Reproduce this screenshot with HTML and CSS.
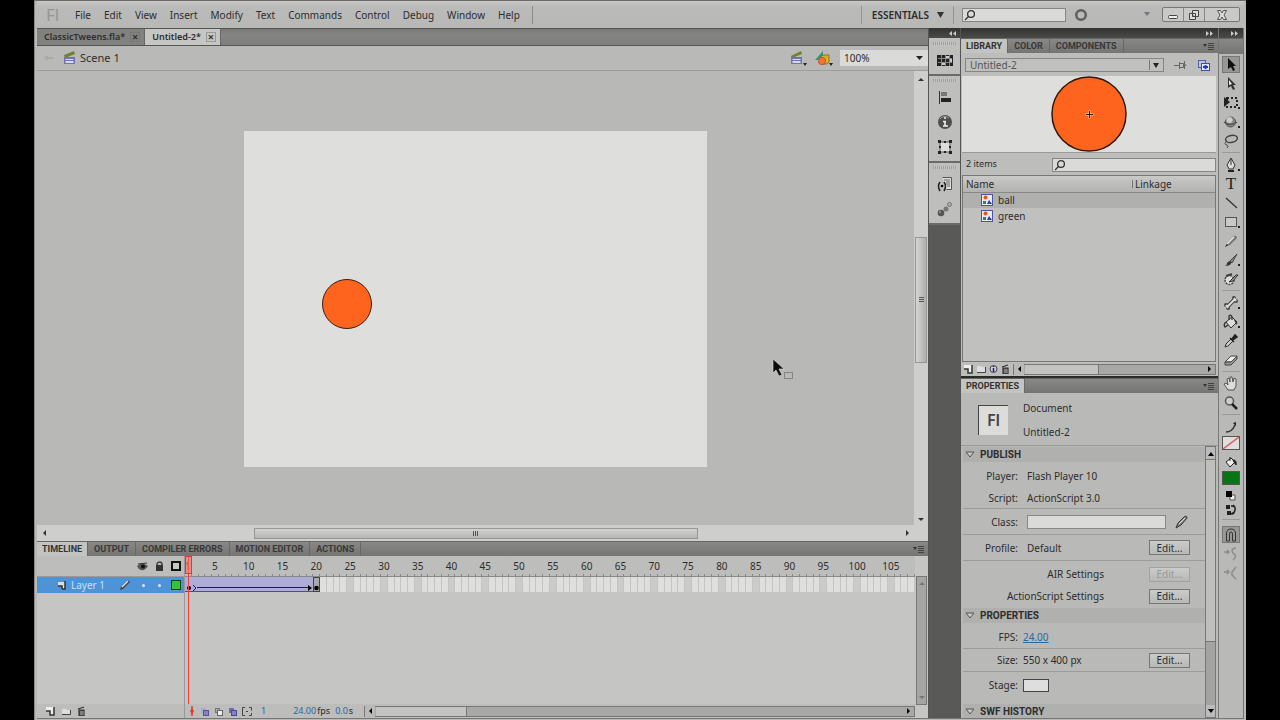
FILE: index.html
```html
<!DOCTYPE html>
<html lang="en">
<head>
<meta charset="utf-8">
<title>Untitled-2 - Flash</title>
<link rel="stylesheet" href="styles.css">
</head>
<body>
<div class="app">
  <header class="menubar">
    <span class="logo">Fl</span>
    <nav class="menus">
      <button>File</button><button>Edit</button><button>View</button><button>Insert</button><button>Modify</button><button>Text</button><button>Commands</button><button>Control</button><button>Debug</button><button>Window</button><button>Help</button>
    </nav>
    <div class="menu-right">
      <button class="essentials">ESSENTIALS <svg width="7" height="6"><path d="M0 0h7L3.5 6z" fill="#333"/></svg></button>
      <label class="search top-search"><svg width="12" height="12" viewBox="0 0 12 12"><circle cx="7" cy="5" r="3.4" class="ln"/><path d="M4.500 7.500L1 11" class="ln"/></svg><input type="text" aria-label="Search help"></label>
      <svg class="ring" width="14" height="14"><circle cx="7" cy="7" r="4.800" fill="none" stroke="#5f5f5e" stroke-width="2.500"/></svg>
      <svg class="drop" width="6" height="5"><path d="M0 0h6L3 4z" fill="#777"/></svg>
      <div class="winbtns">
        <button aria-label="Minimize"><svg width="12" height="12"><rect x="1.500" y="6.500" width="9" height="3" rx="1" fill="#eee" stroke="#444"/></svg></button>
        <button aria-label="Restore"><svg width="12" height="12"><path d="M4.500 1.500h6v6h-6z M1.500 4.500h6v6h-6z" fill="#ddd" stroke="#444"/><path d="M4 7h2" stroke="#444"/></svg></button>
        <button class="close" aria-label="Close"><svg width="12" height="12"><path d="M1.500 1.500h3L6 4l1.500-2.500h3L8 6l2.500 4.500h-3L6 8l-1.500 2.500h-3L4 6z" fill="#ddd" stroke="#555"/></svg></button>
      </div>
    </div>
  </header>

  <main class="workspace">
    <section class="document">
      <div class="doc-tabs">
        <div class="doc-tab">ClassicTweens.fla* <button aria-label="Close ClassicTweens.fla">×</button></div>
        <div class="doc-tab active">Untitled-2* <button aria-label="Close Untitled-2">×</button></div>
      </div>
      <div class="editbar">
        <svg class="back" width="12" height="8"><path d="M1 4l4-3v2h5v2H5v2z" fill="#a9a9a7"/></svg>
        <svg width="14" height="14" viewBox="0 0 14 14"><path d="M1 4L11 0l1 3L2 7z" fill="#76802a"/><path d="M1 6h11v7H1z" fill="#7272b8"/><path d="M2.500 8h8v1h-8zm0 2h8v2h-8z" fill="#d7d7f2"/></svg>
        <span class="scene">Scene 1</span>
        <div class="edit-right">
          <button aria-label="Edit scene"><svg width="18" height="15" viewBox="0 0 18 15"><path d="M1 5L11 0l1 3L2 7z" fill="#76802a"/><path d="M1 6h11v7H1z" fill="#7272b8"/><path d="M2.500 8h8v1h-8zm0 2h8v2h-8z" fill="#d7d7f2"/><path d="M13 12h4l-2 3z" fill="#222"/></svg></button>
          <button aria-label="Edit symbols"><svg width="20" height="15" viewBox="0 0 20 15"><path d="M1 9L9 0v9z" fill="#2c9a7c"/><path d="M7 5l3-1h5v7l-2 2H7z" fill="#d8b321" stroke="#6b5a12" stroke-width=".7"/><circle cx="8" cy="10" r="3.700" fill="#f3703a" stroke="#a44420" stroke-width=".6"/><path d="M15 12h4l-2 3z" fill="#222"/></svg></button>
          <select class="zoom" aria-label="Zoom"><option>100%</option></select>
        </div>
      </div>
      <div class="stage-row">
        <div class="pasteboard">
          <div class="stage"></div>
          <div class="ball"></div>
          <svg class="cursor" width="22" height="24" viewBox="0 0 22 24"><path d="M1 1v14l3-3 3 6 3-1-3-6h5z" fill="#0d0d0d" stroke="#ddd" stroke-width=".6"/><rect x="12.500" y="14.500" width="8" height="6" fill="none" stroke="#555" stroke-dasharray="1 1"/></svg>
        </div>
        <div class="sb-v">
          <svg width="6" height="4"><path d="M0 4h6L3 1z" fill="#333"/></svg>
          <div class="track"><div class="thumb"><svg width="5" height="6"><path d="M0 .5h5M0 2.500h5M0 4.500h5" stroke="#555"/></svg></div></div>
          <svg width="6" height="4"><path d="M0 0h6L3 3z" fill="#333"/></svg>
        </div>
      </div>
      <div class="sb-h">
        <svg width="4" height="6"><path d="M4 0v6L1 3z" fill="#333"/></svg>
        <div class="track"><div class="thumb"><svg width="6" height="5"><path d="M.5 0v5M2.500 0v5M4.500 0v5" stroke="#555"/></svg></div></div>
        <svg width="4" height="6"><path d="M0 0v6l3-3z" fill="#333"/></svg>
      </div>

      <div class="timeline">
        <div class="tabs">
          <button class="on">TIMELINE</button><button>OUTPUT</button><button>COMPILER ERRORS</button><button>MOTION EDITOR</button><button>ACTIONS</button>
          <svg class="flyout" width="12" height="8"><path d="M0 2h4L2 5z" fill="#333"/><path d="M5 1.500h6M5 3.500h6M5 5.500h6M5 7.500h6" stroke="#444"/></svg>
        </div>
        <div class="tl-body">
          <div class="layers">
            <div class="layer-head">
              <svg width="11" height="9"><path d="M0 4Q5-1 11 4Q8 9 4 8Q1 7 0 4z" fill="#555"/><circle cx="6" cy="4.500" r="2" fill="#111"/><path d="M1 2l9-1" stroke="#333"/></svg>
              <svg width="9" height="10"><path d="M2 5V3.500a2.500 2.500 0 0 1 5 0V5" fill="none" stroke="#444" stroke-width="1.500"/><rect x="1" y="4" width="7" height="6" fill="#333"/></svg>
              <svg width="10" height="10"><rect x="1" y="1" width="8" height="8" fill="#c8c8c6" stroke="#111" stroke-width="2"/></svg>
            </div>
            <div class="layer">
              <svg width="9" height="9"><path d="M1 1h7v7H5V5H1z" fill="#ddd"/><path d="M8 0v8H5M5 8V5H1" fill="none" stroke="#333" stroke-width="1.500"/></svg>
              <span class="lname">Layer 1</span>
              <svg width="12" height="12"><path d="M1 11l1-3 7-7 2 2-7 7z" fill="#444"/><path d="M3 8l6-6" stroke="#eee" stroke-width="1.200"/></svg>
              <i></i><i></i>
              <svg width="10" height="10"><rect x=".5" y=".5" width="9" height="9" fill="#30c437" stroke="#144017"/></svg>
            </div>
            <div class="fill"></div>
            <div class="layer-foot">
              <svg width="10" height="10"><path d="M1 1h8v8H5V5H1z" fill="#eee"/><path d="M9 1v8H5V5H1" fill="none" stroke="#333" stroke-width="1.500"/></svg>
              <svg width="10" height="10"><path d="M1 3h4l1 1h3v4H1z" fill="#ddd"/><path d="M1 8.500h8.500V4" fill="none" stroke="#444"/></svg>
              <svg width="9" height="10"><path d="M1 3l6-2M2 4h5v6H2z" fill="#555" stroke="#333" stroke-width="1.200"/><path d="M4 5v4M6 5v4" stroke="#ddd" stroke-width=".6"/></svg>
            </div>
          </div>
          <div class="frames">
            <div class="ruler" id="ruler"></div>
            <div class="cells" id="cells">
              <div class="tween"><svg width="4" height="6"><circle cx="2" cy="3" r="2"/></svg><svg class="gt" width="4" height="6"><path d="M0 0l3 3-3 3" fill="none" stroke="#222"/></svg><span></span><svg width="4" height="6"><path d="M0 0l4 3-4 3z"/></svg></div>
              <div class="endkey"><svg width="5" height="6"><circle cx="2.500" cy="3" r="2.300"/></svg></div>
            </div>
            <div class="fill"></div>
            <div class="playhead"><div></div></div>
            <div class="frame-foot">
              <svg width="6" height="10"><path d="M3 0v10" stroke="#e23a30" stroke-width="1.500"/><path d="M3 2l2 3-2 3-2-3z" fill="#e23a30"/></svg>
              <svg class="onion" width="9" height="9"><rect x="1" y="1" width="5" height="5" fill="#aaa9cf"/><rect x="3.500" y="3.500" width="5" height="5" fill="#8582bd" stroke="#55538e"/></svg>
              <svg width="9" height="9"><rect x="1.500" y="1.500" width="4" height="4" fill="#aaa" stroke="#777"/><rect x="3.500" y="3.500" width="5" height="5" fill="#eee" stroke="#666"/></svg>
              <svg width="9" height="9"><rect x="1" y="1" width="5" height="5" fill="#6e6bb0"/><rect x="3.500" y="3.500" width="5" height="5" fill="#8582bd" stroke="#4b4992"/></svg>
              <svg width="10" height="9"><path d="M3 .5H.5v8H3M7 .5h2.500v3M9.500 6v2.500H7" fill="none" stroke="#444"/><path d="M4 4.500h2" stroke="#444"/></svg>
              <span class="blue num">1</span><span class="blue fps">24.00</span><span>fps</span><span class="blue sec">0.0</span><span>s</span>
              <div class="scroller"><svg width="4" height="6"><path d="M4 0v6L1 3z"/></svg><b></b><svg width="4" height="6"><path d="M0 0v6l3-3z"/></svg></div>
            </div>
          </div>
          <div class="tl-side"><div class="tl-scroll"><svg width="6" height="4"><path d="M0 4h6L3 1z" fill="#777"/></svg><svg width="6" height="4"><path d="M0 0h6L3 3z" fill="#777"/></svg></div></div>
        </div>
      </div>
    </section>

    <aside class="dock">
      <div class="cap"><svg width="8" height="5"><path d="M4 0v5L1 2.500zM8 0v5L5 2.500z" fill="#ccc"/></svg></div>
      <div class="dgroup"><button aria-label="Swatches"><svg width="16" height="12"><path d="M0 1h16v11H0z" fill="#222"/><path d="M1 4.500h14M1 8.500h14M4.500 1v11M8.500 1v11M12.500 1v11" stroke="#888"/><path d="M9 2h3v2H9zM13 5h2v3h-2zM5 9h3v2H5z" fill="#ccc"/></svg></button></div>
      <div class="dgroup">
        <button aria-label="Align"><svg width="14" height="14"><path d="M1.500 1v13" stroke="#333"/><rect x="3" y="2" width="6" height="4" fill="#777"/><rect x="3" y="8" width="10" height="4" fill="#222"/></svg></button>
        <button aria-label="Info"><svg width="16" height="16"><circle cx="8" cy="8" r="7" fill="#4e4e4d"/><path d="M3 5a6 6 0 0 1 9-1" stroke="#999" fill="none"/><path d="M8 3v2M6 7.500h3M8 7v5M6 12h5" stroke="#eee" stroke-width="1.600"/></svg></button>
        <button aria-label="Transform"><svg width="14" height="14"><rect x="2" y="2" width="10" height="10" fill="#ddd" stroke="#555"/><path d="M0 0h3v3H0zM11 0h3v3h-3zM0 11h3v3H0zM11 11h3v3h-3zM6 1h2v2H6zM6 11h2v2H6zM1 6h2v2H1zM11 6h2v2h-2z" fill="#222"/></svg></button>
      </div>
      <div class="dgroup">
        <button aria-label="Code snippets"><svg width="16" height="16"><path d="M5.500 1.500h9v12h-5" fill="#ddd" stroke="#555"/><path d="M7 4h6M9 6h4M9 8h4M10 10h3" stroke="#666"/><path d="M3 6Q0 10 3 15M7 6q3 4 0 9" fill="none" stroke="#222" stroke-width="1.500"/><circle cx="5" cy="10" r="1.300"/></svg></button>
        <button aria-label="Motion presets"><svg width="16" height="16"><circle cx="4" cy="12" r="3.300" fill="#555"/><circle cx="9" cy="8" r="2.500" fill="#777"/><circle cx="12.500" cy="3.500" r="2" fill="#aaa" stroke="#777"/><circle cx="3" cy="11" r="1" fill="#999"/></svg></button>
      </div>
    </aside>

    <aside class="panels">
      <div class="cap"><svg width="8" height="5"><path d="M0 0v5l3-2.500zM4 0v5l3-2.500z" fill="#ccc"/></svg></div>
      <section class="library">
        <div class="tabs"><button class="on">LIBRARY</button><button>COLOR</button><button>COMPONENTS</button>
          <svg class="flyout" width="12" height="8"><path d="M0 2h4L2 5z" fill="#333"/><path d="M5 1.500h6M5 3.500h6M5 5.500h6M5 7.500h6" stroke="#444"/></svg></div>
        <div class="lib-doc">
          <select aria-label="Library document"><option>Untitled-2</option></select>
          <svg width="13" height="12"><path d="M0 6.500h5M5.500 3v7M5.500 4.500h4v4h-4M10.500 2v8M10.500 6h2" fill="none" stroke="#666"/></svg>
          <svg width="13" height="12"><rect x="1.500" y="1.500" width="7" height="7" fill="#bcc4ec" stroke="#5362a8"/><rect x="4.500" y="4.500" width="8" height="7" fill="#e3e6fa" stroke="#3f50a0"/><path d="M6 8h5M8.500 6v4" stroke="#2540c0" stroke-width="2"/></svg>
        </div>
        <div class="preview"><svg width="76" height="76"><circle cx="38" cy="38" r="37" fill="#ff641e" stroke="#30170c" stroke-width="1.500"/><path d="M34.500 38.500h8M38.500 34.500v8" stroke="#ffc8a0" stroke-width="2"/><path d="M35 38.500h7M38.500 35v7" stroke="#222"/></svg></div>
        <div class="lib-find"><span>2 items</span><label class="search"><svg width="12" height="12" viewBox="0 0 12 12"><circle cx="7" cy="5" r="3.400" class="ln"/><path d="M4.500 7.500L1 11" class="ln"/></svg><input type="text" aria-label="Search library"></label></div>
        <div class="lib-list">
          <table>
            <thead><tr><th>Name</th><th class="link">Linkage</th></tr></thead>
            <tbody>
              <tr class="sel"><td><svg width="12" height="12"><rect x=".5" y=".5" width="11" height="11" fill="#e9e9f6" stroke="#4c55a5"/><circle cx="4.500" cy="3.500" r="2" fill="#e8502a"/><rect x="2" y="7" width="3" height="3" fill="#2c8a55"/><path d="M6 10l2-4 3 4z" fill="#2c3bb0"/></svg>ball</td><td></td></tr>
              <tr><td><svg width="12" height="12"><rect x=".5" y=".5" width="11" height="11" fill="#e9e9f6" stroke="#4c55a5"/><circle cx="4.500" cy="3.500" r="2" fill="#e8502a"/><rect x="2" y="7" width="3" height="3" fill="#2c8a55"/><path d="M6 10l2-4 3 4z" fill="#2c3bb0"/></svg>green</td><td></td></tr>
            </tbody>
          </table>
        </div>
        <div class="lib-foot">
          <svg width="10" height="10"><path d="M1 1h8v8H5V5H1z" fill="#eee"/><path d="M9 1v8H5V5H1" fill="none" stroke="#333" stroke-width="1.500"/></svg>
          <svg width="10" height="10"><path d="M1 2h4l1 1h3v5H1z" fill="#ddd"/><path d="M1 8.500h8.500V3" fill="none" stroke="#444"/></svg>
          <svg width="9" height="10"><circle cx="4.500" cy="5" r="3.500" fill="#ccd" stroke="#445"/><path d="M4.500 4v4M4.500 2v1" stroke="#225" stroke-width="1.500"/></svg>
          <svg width="9" height="10"><path d="M1 3l6-2M2 4h5v6H2z" fill="#555" stroke="#333" stroke-width="1.200"/><path d="M4 5v4M6 5v4" stroke="#ddd" stroke-width=".6"/></svg>
          <div class="scroller"><svg width="4" height="6"><path d="M4 0v6L1 3z"/></svg><b></b><svg width="4" height="6"><path d="M0 0v6l3-3z"/></svg></div>
        </div>
      </section>
      <section class="props">
        <div class="tabs"><button class="on">PROPERTIES</button>
          <svg class="flyout" width="12" height="8"><path d="M0 2h4L2 5z" fill="#333"/><path d="M5 1.500h6M5 3.500h6M5 5.500h6M5 7.500h6" stroke="#444"/></svg></div>
        <div class="prop-head"><div class="flicon">Fl</div><div class="ptitle"><span>Document</span><span>Untitled-2</span></div></div>
        <div class="prop-body">
          <div class="prop-list">
            <h3><svg width="10" height="7"><path d="M1 1h8L5 6z" class="tri"/></svg>PUBLISH</h3>
            <div class="row"><span class="k">Player:</span><span>Flash Player 10</span></div>
            <div class="row line"><span class="k">Script:</span><span>ActionScript 3.0</span></div>
            <div class="row tall line"><label class="k" for="cls">Class:</label><input id="cls" class="cls" type="text"><svg width="14" height="14"><path d="M1 13l2-5 6-6q3-2 3 1l-6 7z" fill="#888" stroke="#333"/><path d="M4 9l6-6" stroke="#ddd"/></svg></div>
            <div class="row tall line"><span class="k">Profile:</span><span>Default</span><button class="edit">Edit...</button></div>
            <div class="row set first"><span class="wide">AIR Settings</span><button class="edit" disabled>Edit...</button></div>
            <div class="row set"><span class="wide">ActionScript Settings</span><button class="edit">Edit...</button></div>
            <h3><svg width="10" height="7"><path d="M1 1h8L5 6z" class="tri"/></svg>PROPERTIES</h3>
            <div class="row line near"><span class="k">FPS:</span><a href="#">24.00</a></div>
            <div class="row line near"><span class="k">Size:</span><span>550 x 400 px</span><button class="edit">Edit...</button></div>
            <div class="row near stagec"><label class="k" for="stg">Stage:</label><button id="stg" class="swatch" aria-label="Stage color"></button></div>
            <h3><svg width="10" height="7"><path d="M1 1h8L5 6z" class="tri"/></svg>SWF HISTORY</h3>
          </div>
          <div class="prop-scroll"><i><svg width="6" height="5"><path d="M0 5h6L3 1z"/></svg></i><b></b><i><svg width="6" height="5"><path d="M0 0h6L3 4z"/></svg></i></div>
        </div>
      </section>
    </aside>

    <aside class="toolcol">
      <div class="cap"><svg width="8" height="5"><path d="M0 0v5l3-2.500zM4 0v5l3-2.500z" fill="#ccc"/></svg></div>
      <div class="toolhead"></div>
      <div class="tools">
        <button class="on" aria-label="Selection"><svg width="16" height="16"><path d="M5 1v11l3-2 2 4 2-1-2-4h3z" fill="#111"/></svg></button>
        <button aria-label="Subselection"><svg width="16" height="16"><path d="M5 1v11l3-2 2 4 2-1-2-4h3z" fill="#333"/><path d="M6 4v5l3-1z" fill="#eee"/></svg></button>
        <button class="more" aria-label="Free transform"><svg width="16" height="16"><rect x="4" y="3" width="10" height="9" fill="none" stroke="#222" stroke-width="2" stroke-dasharray="2 2"/><path d="M1 2v10l6-5z" fill="#222"/></svg></button>
        <button class="more" aria-label="3D rotation"><svg width="16" height="16"><circle cx="7.500" cy="8" r="5" fill="#888" stroke="#555"/><circle cx="6.500" cy="6" r="3" fill="#ccc"/><path d="M1 8q6 5 13 0" fill="none" stroke="#555" stroke-width="1.500"/></svg></button>
        <button aria-label="Lasso"><svg width="16" height="16"><ellipse cx="8.500" cy="6" rx="6" ry="3.500" transform="rotate(-12 8 6)" fill="none" stroke="#444" stroke-width="1.500"/><path d="M4 8q-4 3 0 4 2 1 0 3" fill="none" stroke="#444"/></svg></button>
        <hr>
        <button class="more" aria-label="Pen"><svg width="16" height="16"><path d="M8 1l4 7-2 4H6L4 8z" fill="#ddd" stroke="#333"/><path d="M8 2v6" stroke="#333"/><path d="M5 13h6v2H5z" fill="#222"/></svg></button>
        <button class="type" aria-label="Text">T</button>
        <button aria-label="Line"><svg width="16" height="16"><path d="M3 3l11 10" stroke="#333" stroke-width="1.300"/></svg></button>
        <button class="more" aria-label="Rectangle"><svg width="16" height="16"><rect x="2.500" y="3.500" width="11" height="9" fill="#c9c9c8" stroke="#555"/></svg></button>
        <button aria-label="Pencil"><svg width="16" height="16"><path d="M2 14l2-4 7-7q3-1 3 2l-7 7z" fill="#777"/><path d="M4 11l7-7" stroke="#e6e6e6" stroke-width="1.500"/><path d="M2 14l2-3 1 1z" fill="#222"/></svg></button>
        <button class="more" aria-label="Brush"><svg width="16" height="16"><path d="M7 9l7-7-5 9z" fill="#888" stroke="#444"/><path d="M1 14q3 0 3-3 2-3 4-1 1 4-7 4z" fill="#333"/></svg></button>
        <button aria-label="Deco"><svg width="16" height="16"><circle cx="6.500" cy="9" r="4.500" fill="#ddd" stroke="#444" stroke-width="1.500" stroke-dasharray="2 1"/><path d="M6 11l7-7h2l-5 6z" fill="#999" stroke="#333"/><path d="M3 5l6-2" stroke="#444" stroke-width="2"/></svg></button>
        <hr>
        <button class="more" aria-label="Bone"><svg width="16" height="16"><path d="M4 12L12 4" stroke="#444" stroke-width="4"/><circle cx="3" cy="10" r="2" fill="#444"/><circle cx="5" cy="13" r="2" fill="#444"/><circle cx="11" cy="3" r="2" fill="#444"/><circle cx="13" cy="6" r="2" fill="#444"/><path d="M3 10l2 3M4 12L12 4M11 3l2 3" stroke="#ddd" stroke-width="2"/></svg></button>
        <button class="more" aria-label="Paint bucket"><svg width="16" height="16"><path d="M3 8l6-5 5 5-6 6z" fill="#ddd" stroke="#333"/><path d="M3 8q-3 2-1 5l3-2M6 6V2q2-2 3 1v3" fill="none" stroke="#333" stroke-width="1.300"/><path d="M11 6q4 0 3 5l-2-3z" fill="#333"/></svg></button>
        <button aria-label="Eyedropper"><svg width="16" height="16"><path d="M2 14l1-3 5-5 2 2-5 5z" fill="#ccc" stroke="#333"/><path d="M7 5l4 4M9 6l3-4 2 2-4 3z" fill="#222" stroke="#222" stroke-width="1.500"/></svg></button>
        <button aria-label="Eraser"><svg width="16" height="16"><path d="M2 10l6-6h6l-6 6z" fill="#eee" stroke="#444"/><path d="M2 10v3h6l6-6V4L8 10z" fill="#999" stroke="#444"/></svg></button>
        <hr>
        <button aria-label="Hand"><svg width="16" height="16"><path d="M5 14L1 8l2-1 2 2-1-6 2-1 1 4V1h2l1 5 1-4 2 1v7l-2 4z" fill="#ddd" stroke="#555"/></svg></button>
        <button aria-label="Zoom"><svg width="16" height="16"><circle cx="6.500" cy="6" r="4" fill="#ccc" stroke="#555" stroke-width="1.500"/><path d="M9 9l5 5" stroke="#222" stroke-width="2.500"/></svg></button>
        <hr>
        <button aria-label="Stroke color"><svg width="16" height="16"><path d="M3 13q6 0 9-7" fill="none" stroke="#333" stroke-width="1.500"/><path d="M10 4l3-1v4z" fill="#222"/></svg></button>
        <button class="well none" aria-label="No stroke"><svg width="16" height="12"><path d="M0 12L16 0" stroke="#e0606c" stroke-width="1.500"/></svg></button>
        <button aria-label="Fill color"><svg width="16" height="16"><path d="M3 8l5-4 4 4-5 5z" fill="#eee" stroke="#222"/><path d="M7 7V3M10 6q4 0 3 5l-2-3z" fill="#222" stroke="#222"/></svg></button>
        <button class="well green" aria-label="Green fill"></button>
        <button class="mini" aria-label="Black and white"><svg width="12" height="12"><path d="M5 5h5v5H5z" fill="#eee" stroke="#555"/><path d="M1 1h6v6H1z"/></svg></button>
        <button class="mini" aria-label="Swap colors"><svg width="12" height="12"><path d="M1 1h4v4H1zM2 7h4v4H2z" fill="#222"/><path d="M6 2q5 0 4 4t-3 4M8 1l2 2M8 9l-2 1" fill="none" stroke="#222" stroke-width="1.500"/></svg></button>
        <hr>
        <button class="on magnet" aria-label="Snap to objects"><svg width="16" height="16"><path d="M3.500 14V7q0-5 4.500-5t4.500 5v7h-3V7q0-2-1.500-2T6.500 7v7z" fill="#999" stroke="#333"/></svg></button>
        <button aria-label="Smooth"><svg width="16" height="16"><path d="M1 6h5M4 4l2 2-2 2M13 2q-6 1-3 5 5 3 0 7" fill="none" stroke="#8c8c8a" stroke-width="1.500"/></svg></button>
        <button aria-label="Straighten"><svg width="16" height="16"><path d="M1 7h5M4 5l2 2-2 2M13 2L9 7v3l4 4" fill="none" stroke="#8c8c8a" stroke-width="1.500"/></svg></button>
      </div>
    </aside>
  </main>
</div>
<script src="timeline.js"></script>
</body>
</html>
```
FILE: styles.css
```css
* { box-sizing: border-box; }
body {
  margin: 0;
  background: #000;
  color: #2d2d2d;
  font: 10px/14px "Noto Sans", "Open Sans", sans-serif;
}
button, input, select { font: inherit; color: inherit; margin: 0; padding: 0; }
button { background: none; border: 0; }
svg { display: block; flex: none; }
.ln { fill: none; stroke: #333; stroke-width: 1.3; }
.tri { fill: #c9c9c7; stroke: #555; }
.fill { flex: 1; }

.app {
  display: flex;
  flex-direction: column;
  height: 100vh;
  margin: 0 34px;
  padding: 0 2px 1px 2px;
  background: #b9b9b7;
  border-top: 1px solid #6f6869;
  border-left: 1px solid #8a8a88;
}

/* Menu bar */
.menubar { display: flex; align-items: center; height: 27px; flex: none; background: linear-gradient(#c8c8c6, #bababa 6px, #b8b8b6); }
.logo { width: 38px; padding-left: 9px; font-size: 17px; color: #969694; }
.menus { display: flex; align-items: center; gap: 13px; padding-right: 12px; height: 18px; border-right: 1px solid #8a8a88; }
.menu-right { display: flex; align-items: center; margin-left: auto; padding-right: 4px; }
.essentials { display: flex; align-items: center; gap: 8px; height: 18px; padding: 0 9px 0 10px; margin-right: 8px; border: solid #949492; border-width: 0 1px; font-weight: 600; }
.search { display: flex; align-items: center; padding-left: 1px; height: 14px; background: #dadad8; border: 1px solid #868684; }
.search input { flex: 1; min-width: 0; width: 20px; height: 12px; border: 0; background: none; outline: 0; }
.top-search { width: 104px; }
.ring { margin: 0 54px 0 8px; }
.drop { margin: 0 12px 0 2px; }
.winbtns { display: flex; height: 15px; border: 1px solid #777; border-radius: 2px; background: #c9c9c7; }
.winbtns button { display: flex; align-items: center; justify-content: center; width: 21px; border-right: 1px solid #888; }
.winbtns .close { width: 34px; border: 0; }

.workspace { flex: 1; min-height: 0; display: grid; grid-template-columns: minmax(0, 1fr) 32px 257px 26px; border-bottom: 1px solid #777; }
.document { display: flex; flex-direction: column; min-height: 0; border-right: 1px solid #555; }

.doc-tabs { display: flex; height: 18px; flex: none; background: linear-gradient(#777775, #858583 5px, #7e7e7c); border: solid #555553; border-width: 1px 0; }
.doc-tab { display: flex; align-items: center; gap: 5px; padding: 0 4px 0 7px; background: #81817f; color: #2e2e2d; border-right: 1px solid #666; font-weight: 600; font-size: 9px; }
.doc-tab.active { background: #c6c6c4; }
.doc-tab button { width: 10px; height: 10px; line-height: 8px; font-size: 11px; border: 1px solid #777; }
.doc-tab.active button { border-color: #999; }
.editbar { display: flex; align-items: center; height: 25px; flex: none; padding-left: 6px; border-bottom: 1px solid #9c9c9a; background: #b9b9b7; }
.back { margin-right: 8px; }
.scene { margin-left: 3px; font-size: 11px; }
.edit-right { display: flex; align-items: center; gap: 6px; margin-left: auto; }
.zoom { width: 88px; height: 16px; padding-left: 4px; border: 0; appearance: none; background: url("data:image/svg+xml,%3Csvg xmlns='http://www.w3.org/2000/svg' width='7' height='4'%3E%3Cpath d='M0 0h7L3.500 4z' fill='%23222'/%3E%3C/svg%3E") right 5px center no-repeat #dadad8; }

.stage-row { flex: 1; min-height: 0; display: flex; }
.pasteboard { flex: 1; position: relative; overflow: hidden; background: #b8b8b6; }
.stage { position: absolute; left: 207px; top: 60px; width: 463px; height: 336px; background: #dededc; }
.ball { position: absolute; left: 285px; top: 208px; width: 50px; height: 50px; border-radius: 50%; background: #ff641e; border: 1px solid #3a1f12; }
.cursor { position: absolute; left: 735px; top: 287px; }
.sb-v { display: flex; flex-direction: column; align-items: center; width: 14px; padding: 6px 0 3px; background: #cececc; }
.sb-v .track { flex: 1; width: 12px; padding-top: 156px; }
.sb-v .thumb { height: 126px; background: linear-gradient(to right, #d6d6d4, #aeaeac); }
.thumb { display: flex; align-items: center; justify-content: center; border: 1px solid #969694; }
.sb-h { display: flex; align-items: center; height: 16px; flex: none; padding: 0 18px 0 5px; background: #cececc; }
.sb-h .track { flex: 1; padding: 0 24%; }
.sb-h .thumb { height: 11px; background: linear-gradient(#d2d2d0, #b5b5b3); }

/* Panel tabs */
.tabs { display: flex; align-items: stretch; height: 15px; flex: none; background: linear-gradient(#888886, #757573); border-top: 1px solid #666664; }
.tabs button { padding: 0 6px; line-height: 14px; font: 700 9px/14px Roboto, sans-serif; color: #383837; border-right: 1px solid #686866; white-space: nowrap; }
.tabs .on { background: #c3c3c1; padding: 0 5px; color: #333; }
.flyout { margin: 3px 3px 0 auto; }

/* Timeline */
.timeline { display: flex; flex-direction: column; height: 177px; flex: none; background: #c5c5c3; }
.tl-body { flex: 1; min-height: 0; display: flex; }
.layers { display: flex; flex-direction: column; width: 148px; border-right: 1px solid #999; }
.layer-head { display: flex; align-items: center; justify-content: flex-end; gap: 7px; height: 21px; padding-right: 3px; background: #bdbdbb; border-bottom: 1px solid #999; }
.layer { display: flex; align-items: center; height: 16px; padding: 0 3px 0 20px; background: #4d93d6; color: #c8e0f5; }
.lname { flex: 1; margin-left: 5px; }
.layer i { width: 3px; height: 3px; margin-left: 11px; border-radius: 50%; background: #d5e8fa; }
.layer i + i { margin: 0 10px 0 13px; }
.layer-foot { display: flex; align-items: center; gap: 6px; height: 14px; padding-left: 8px; background: #bdbdbb; }
.frames { flex: 1; min-width: 0; display: flex; flex-direction: column; position: relative; }
.ruler { display: grid; grid-template-columns: repeat(108, minmax(0, 1fr)); height: 20px; background: #bdbdbb; }
.ruler span { display: flex; justify-content: center; line-height: 20px; border-right: 1px solid; border-image: linear-gradient(transparent 85%, #888 85%) 1; white-space: nowrap; }
.cells { display: grid; grid-template-columns: repeat(108, minmax(0, 1fr)); height: 16px; border-top: 1px solid #888; }
.cells > span { grid-row: 1; background: #dfdfdd; border-right: 1px solid #c4c4c2; }
.cells > .fifth { background: #cbcbc9; }
.tween, .endkey { grid-row: 1; z-index: 1; display: flex; align-items: flex-end; border-bottom: 1px solid #555; }
.tween { grid-column: 1 / 20; padding: 0 1px 0 2px; background: #aeadd9; }
.tween .gt { margin-left: 2px; }
.tween span { flex: 1; height: 1px; margin-bottom: 3px; background: #222; }
.endkey { grid-column: 20; justify-content: center; background: #a9a9a7; border: 1px solid #444; }
.playhead { position: absolute; left: 3px; top: 0; bottom: 14px; width: 1px; background: #f04038; z-index: 2; }
.playhead div { width: 7px; height: 18px; margin-left: -3px; border: 1px solid #dc3a30; background: #f8706088; }
.frame-foot { display: flex; align-items: center; gap: 5px; height: 14px; padding-left: 4px; background: #bdbdbb; font-size: 9px; }
.blue { color: #28699f; }
.num { margin: 0 22px 0 4px; }
.fps { margin-right: -4px; }
.sec { margin-right: -4px; }
.scroller { flex: 1; display: flex; align-items: center; height: 11px; margin-left: 6px; padding: 0 3px; border: 1px solid #777; background: #a8a8a6; }
.scroller b { width: 91px; height: 9px; margin-left: 4px; margin-right: auto; background: #c3c3c1; border-right: 1px solid #777; }
.scroller svg:first-child { outline: 3px solid #b9b9b7; background: #b9b9b7; }
.tl-side { width: 13px; padding: 20px 1px 13px; }
.tl-scroll { display: flex; flex-direction: column; justify-content: space-between; align-items: center; height: 100%; padding: 4px 0; border: 1px solid #777; background: #a5a5a3; }

/* Right side */
.cap { display: flex; align-items: center; justify-content: flex-end; height: 10px; flex: none; padding-right: 4px; background: linear-gradient(#333332, #4a4a48); }
.dock { background: #595957; display: flex; flex-direction: column; border-right: 1px solid #555; }
.dgroup { display: flex; flex-direction: column; align-items: center; gap: 9px; padding: 4px 3px 6px; background: #bebebc; border-bottom: 2px solid #6b6b69; }
.dgroup + .dgroup { padding-top: 3px; }
.dgroup::before { content: ""; width: 24px; height: 3px; margin-bottom: -2px; background: repeating-linear-gradient(to right, #a0a09e 0 1px, #c4c4c2 1px 2px); }
.dgroup button { display: flex; align-items: center; justify-content: center; height: 16px; }
.panels { display: flex; flex-direction: column; min-height: 0; }
.library { display: flex; flex-direction: column; height: 340px; flex: none; background: #bdbdbb; border-bottom: 2px solid #2a2a29; }
.lib-doc { display: flex; align-items: center; gap: 10px; height: 23px; flex: none; padding: 0 8px 0 4px; }
.lib-doc select { flex: 1; height: 14px; padding-left: 4px; appearance: none; border: 1px solid #858583; color: #555; line-height: 12px; background: url("data:image/svg+xml,%3Csvg xmlns='http://www.w3.org/2000/svg' width='11' height='10'%3E%3Cpath d='M.5 0v10' stroke='%23777'/%3E%3Cpath d='M4 3h6L7 8z' fill='%23222'/%3E%3C/svg%3E") right 3px center no-repeat #c0c0be; }
.preview { display: flex; justify-content: center; height: 77px; flex: none; margin: 0 2px 0 1px; background: #dededc; border-bottom: 1px solid #999; }
.lib-find { display: flex; align-items: center; height: 22px; flex: none; padding-left: 5px; font-size: 9px; }
.lib-find .search { width: 164px; margin: 2px 2px 0 auto; }
.lib-list { flex: 1; min-height: 0; margin: 0 2px 0 1px; border: 1px solid #777; background: #c0c0be; }
table { width: 100%; border-collapse: collapse; table-layout: fixed; }
th, td { height: 16px; padding: 0 0 0 3px; text-align: left; font-weight: 400; line-height: 14px; }
th { background: linear-gradient(#c9c9c7, #b2b2b0); border-bottom: 1px solid #888; }
.link { width: 83px; background: linear-gradient(#777, #777) 0 4px / 1px 8px no-repeat, linear-gradient(#c9c9c7, #b2b2b0); }
td svg { float: left; margin: 1px 5px 0 15px; }
.sel td { background: #b0b0ae; }
.lib-foot { display: flex; align-items: center; gap: 3px; height: 14px; flex: none; padding: 0 2px 0 2px; }
.lib-foot .scroller { margin-left: 0; }
.lib-foot .scroller b { width: 74px; }

.props { flex: 1; min-height: 0; display: flex; flex-direction: column; background: #b9b9b7; }
.prop-head { display: flex; align-items: center; gap: 15px; height: 53px; flex: none; padding: 2px 0 0 17px; border-bottom: 1px solid #999; }
.flicon { width: 30px; height: 30px; line-height: 28px; text-align: center; font-size: 16px; font-weight: 600; color: #444; background: #dcdcda; border: solid #444; border-width: 1px 0 0 1px; }
.ptitle { display: flex; flex-direction: column; gap: 10px; }
.prop-body { flex: 1; min-height: 0; display: flex; }
.prop-list { flex: 1; overflow: hidden; }
h3 { display: flex; align-items: center; gap: 5px; height: 15px; margin: 1px 0 0 2px; padding-left: 2px; background: #b0b0ae; font: 700 10px/15px Roboto, sans-serif; }
h3 + .row { margin-top: 3px; }
.row { display: flex; align-items: center; gap: 9px; height: 22px; margin-left: 2px; }
.line { border-bottom: 1px solid #9c9c9a; }
.tall { height: 26px; }
.near { gap: 5px; }
.k { width: 55px; text-align: right; }
.wide { width: 141px; text-align: right; }
.first { margin-top: 2px; }
.near.line { height: 23px; }
.stagec { height: 31px; padding-bottom: 5px; }
.cls { width: 139px; height: 14px; background: #dadad8; border: 1px solid #888; }
.edit { width: 41px; height: 15px; line-height: 12px; margin: 0 15px 0 auto; border: 1px solid #777; background: linear-gradient(#cbcbc9, #b8b8b6); }
.edit:disabled { color: #999; border-color: #a2a2a0; }
a { color: #28699f; }
.swatch { width: 26px; height: 13px; background: #dedede; border: 1px solid #444; }
.prop-scroll { display: flex; flex-direction: column; width: 11px; margin-right: 2px; border: 1px solid #777; background: #a3a3a1; }
.prop-scroll i { display: flex; align-items: center; justify-content: center; height: 12px; background: #bbb; }
.prop-scroll b { height: 183px; margin-bottom: auto; background: #bfbfbd; border: solid #777; border-width: 1px 0; }

.toolcol { display: flex; flex-direction: column; background: #b9b9b7; border: solid #777; border-width: 0 1px; }
.toolhead { height: 16px; flex: none; background: linear-gradient(#888886, #757573); border-top: 1px solid #666; }
.tools { display: flex; flex-direction: column; align-items: center; padding-top: 1px; }
.tools button { position: relative; display: flex; align-items: center; justify-content: center; width: 18px; height: 19px; flex: none; }
.tools .on { background: #979795; border: 1px solid #777; height: 17px; margin: 1px 0; }
.tools .magnet { margin: 4px 0 1px; }
.tools .type { font: 17px/19px "Liberation Serif", serif; color: #222; }
.more::after { content: ""; position: absolute; right: 0; bottom: 3px; width: 2px; height: 2px; background: #222; }
.tools hr { width: 18px; height: 1px; margin: 2px 0; border: 0; background: #999; flex: none; }
.tools .well { height: 14px; border: 1px solid #555; }
.tools .none { background: #dedede; margin-bottom: 2px; }
.tools .green { background: #087415; margin-bottom: 4px; }
.tools .mini { height: 14px; }
```
FILE: timeline.js
```js
const FRAMES = 108;
const ruler = document.getElementById("ruler");
const cells = document.getElementById("cells");
for (let n = 1; n <= FRAMES; n++) {
  const mark = document.createElement("span");
  if (n === 1 || n % 5 === 0) mark.textContent = n;
  ruler.append(mark);
  const cell = document.createElement("span");
  cell.style.gridColumn = n;
  if (n % 5 === 0) cell.className = "fifth";
  cells.append(cell);
}
```
